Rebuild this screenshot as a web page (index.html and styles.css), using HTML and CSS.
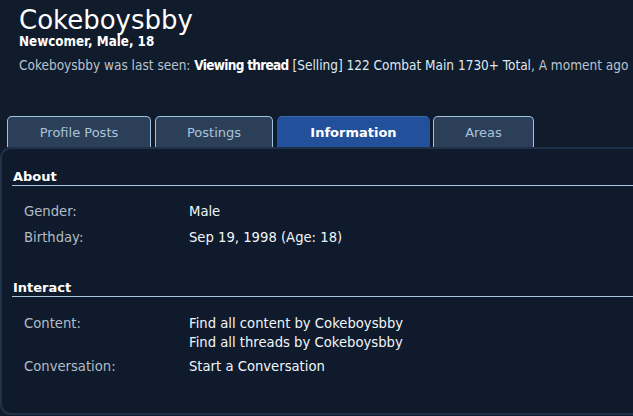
FILE: index.html
```html
<!DOCTYPE html>
<html>
<head>
<meta charset="utf-8">
<link rel="stylesheet" href="styles.css">
</head>
<body>
<div class="header">
  <h1 class="username">Cokeboysbby</h1>
  <div class="usertitle">Newcomer, Male, 18</div>
  <div class="lastseen">Cokeboysbby was last seen: <b>Viewing thread</b> <span class="thread">[Selling] 122 Combat Main 1730+ Total</span>, A moment ago</div>
</div>
<div class="tabs">
  <div class="tab t1">Profile Posts</div>
  <div class="tab t2">Postings</div>
  <div class="tab t3 active">Information</div>
  <div class="tab t4">Areas</div>
</div>
<div class="panel">
  <div class="section">
    <h3 class="sechead">About</h3>
    <dl class="pairs">
      <dt>Gender:</dt><dd>Male</dd>
      <dt>Birthday:</dt><dd>Sep 19, 1998 (Age: 18)</dd>
    </dl>
  </div>
  <div class="section">
    <h3 class="sechead">Interact</h3>
    <dl class="pairs interact">
      <dt>Content:</dt><dd><div>Find all content by Cokeboysbby</div><div>Find all threads by Cokeboysbby</div></dd>
      <dt>Conversation:</dt><dd>Start a Conversation</dd>
    </dl>
  </div>
</div>
</body>
</html>
```

FILE: styles.css
```css
html, body {
  margin: 0;
  padding: 0;
  background: #101b2b;
  font-family: "DejaVu Sans", sans-serif;
  font-size: 13px;
  color: #b9c4cf;
  overflow: hidden;
  height: 416px;
}
.header {
  padding: 6px 0 0 19px;
  white-space: nowrap;
  font-family: "DejaVu Sans Condensed", "DejaVu Sans", sans-serif;
  font-size: 13.5px;
}
.username {
  margin: 0;
  font-family: "DejaVu Sans", sans-serif;
  font-size: 26px;
  font-weight: normal;
  line-height: 29px;
  color: #ffffff;
}
.usertitle {
  font-size: 13.3px;
  font-weight: bold;
  color: #ffffff;
  line-height: 14px;
}
.lastseen {
  margin-top: 8px;
  line-height: 16px;
}
.lastseen b { color: #ffffff; letter-spacing: -0.7px; }
.thread { color: #dfe8f2; }
.tabs {
  display: flex;
  gap: 4px;
  margin: 43px 0 0 7px;
  height: 31px;
}
.tab {
  box-sizing: border-box;
  height: 31px;
  border: 1px solid #9ec2e2;
  border-bottom: none;
  border-radius: 5px 5px 0 0;
  background: #2b3f58;
  color: #aac3dc;
  display: flex;
  align-items: center;
  justify-content: center;
  padding-top: 1px;
}
.t1 { width: 144px; }
.t2 { width: 118px; }
.t3 { width: 153px; }
.t4 { width: 101px; margin-left: -1px; }
.tab.active {
  background: #23509a;
  border-color: #23509a;
  border-top-color: #3f6aaf;
  color: #ffffff;
  font-weight: bold;
}
.panel {
  box-sizing: border-box;
  width: 660px;
  height: 268px;
  border: 2px solid #1f3149;
  border-right: none;
  border-radius: 11px 0 0 11px;
  background: #0f1b2c;
  padding: 20px 0 0 10px;
}
.sechead {
  margin: 0;
  font-size: 13px;
  color: #ffffff;
  line-height: 16px;
  padding-left: 1px;
  border-bottom: 1px solid #a9c4dc;
}
.pairs {
  display: grid;
  grid-template-columns: 165px 1fr;
  margin: 17px 0 0 12px;
  row-gap: 8px;
  line-height: 18px;
  font-size: 13.2px;
}
.pairs dt { color: #b3bcc6; }
.pairs dd { margin: 0; color: #f2f6fa; }
.section + .section { margin-top: 33px; }
.interact { margin-top: 17px; row-gap: 5px; line-height: 19px; }
```
